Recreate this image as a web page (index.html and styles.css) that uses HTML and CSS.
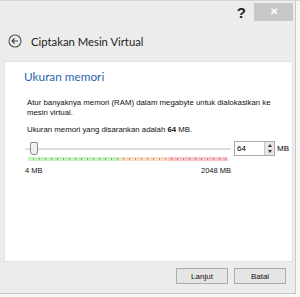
FILE: index.html
```html
<!DOCTYPE html>
<html lang="en">
<head>
    <meta charset="UTF-8">
    <title>Ciptakan Mesin Virtual</title>
    <link rel="stylesheet" href="styles.css">
</head>
<body>
    <div class="desktop">
        <div class="window">
            <div class="titlebar">
                <span class="help">?</span>
                <span class="close">&#x2715;</span>
            </div>
            <div class="header">
                <svg class="back" width="14" height="14" viewBox="0 0 14 14">
                    <circle cx="7" cy="7" r="6" fill="none" stroke="#555" stroke-width="1.1"/>
                    <path d="M10 7H4.2M6.6 4.4L4 7l2.6 2.6" fill="none" stroke="#444" stroke-width="1.2"/>
                </svg>
                <span class="title">Ciptakan Mesin Virtual</span>
            </div>
            <div class="panel">
                <h2 class="heading">Ukuran memori</h2>
                <p class="desc">Atur banyaknya memori (RAM) dalam megabyte untuk dialokasikan ke mesin virtual.</p>
                <p class="desc">Ukuran memori yang disarankan adalah <b>64</b> MB.</p>
                <div class="slider-row">
                    <div class="slider">
                        <div class="track">
                            <div class="thumb"></div>
                        </div>
                        <div class="scale">
                            <div class="zone green"></div>
                            <div class="zone orange"></div>
                            <div class="zone red"></div>
                        </div>
                        <div class="limits">
                            <span>4 MB</span>
                            <span>2048 MB</span>
                        </div>
                    </div>
                    <div class="spin">
                        <span class="value">64</span>
                        <span class="arrows">
                            <span class="up"></span>
                            <span class="down"></span>
                        </span>
                    </div>
                    <span class="unit">MB</span>
                </div>
            </div>
            <div class="footer">
                <button class="btn">Lanjut</button>
                <button class="btn">Batal</button>
            </div>
        </div>
    </div>
</body>
</html>
```

FILE: styles.css
```css
body {
    margin: 0;
    width: 300px;
    height: 297px;
    overflow: hidden;
    background: #f7f7f7;
    font-family: "Liberation Sans", Arial, sans-serif;
}

.desktop {
    border-top: 1px solid #d6d6d6;
}

.window {
    width: 295px;
    height: 292px;
    background: #ececec;
    border-right: 1px solid #c9c9c9;
    border-bottom: 1px solid #c9c9c9;
    display: flex;
    flex-direction: column;
}

.titlebar {
    height: 18px;
    margin-top: 2px;
    display: flex;
    justify-content: flex-end;
    align-items: stretch;
}

.help {
    font-size: 15px;
    font-weight: bold;
    color: #222;
    margin-right: 8px;
    line-height: 20px;
}

.close {
    width: 39px;
    margin-right: 2px;
    background: #c7c7c7;
    color: #fff;
    font-size: 10px;
    font-weight: bold;
    text-align: center;
    line-height: 18px;
}

.header {
    height: 40px;
    display: flex;
    align-items: center;
    padding-left: 8px;
}

.back {
    margin-right: 9px;
}

.title {
    font-family: Lato, sans-serif;
    font-size: 11.3px;
    color: #222;
}

.panel {
    height: 199px;
    margin: 0 2px 0 4px;
    background: #fff;
    border: 1px solid #e2e2e2;
    padding: 0 4px 0 18px;
}

.heading {
    font-family: Lato, sans-serif;
    font-weight: normal;
    font-size: 11.8px;
    color: #2c62b1;
    margin: 7px 0 14px 1px;
}

.desc {
    font-size: 7.8px;
    line-height: 10px;
    color: #111;
    margin: 0 0 7px 4px;
    width: 255px;
}

.slider-row {
    display: flex;
    align-items: flex-start;
    margin-top: 2px;
}

.slider {
    flex-shrink: 0;
    width: 206px;
    margin-left: 2px;
}

.track {
    position: relative;
    height: 2px;
    margin-top: 6px;
    background: #dcdcdc;
    border-radius: 1px;
}

.thumb {
    position: absolute;
    left: 5px;
    top: -6px;
    width: 6px;
    height: 11px;
    background: #f0f0f0;
    border: 1px solid #8c8c8c;
    border-radius: 1px 1px 3px 3px;
}

.scale {
    position: relative;
    display: flex;
    height: 4px;
    margin: 7px 3px 0 3px;
}

.scale::after {
    content: "";
    position: absolute;
    inset: 0;
    background-image: repeating-linear-gradient(90deg, transparent 0 5px, rgba(0, 0, 0, 0.3) 5px 6px);
    background-size: 100% 2px;
    background-repeat: no-repeat;
    background-position: 0 1px;
}

.zone {
    height: 4px;
}

.green {
    width: 93px;
    background: #c3f5bd;
}

.orange {
    width: 47px;
    background: #fcd9c3;
}

.red {
    flex: 1;
    background: #fbc3c3;
}

.limits {
    display: flex;
    justify-content: space-between;
    font-size: 7.5px;
    color: #111;
    margin-top: 5px;
}

.spin {
    flex-shrink: 0;
    display: flex;
    width: 39px;
    height: 13px;
    margin-left: 3px;
    margin-top: -1px;
    border: 1px solid #a9a9a9;
    background: #fff;
}

.value {
    flex: 1;
    font-size: 8px;
    line-height: 13px;
    padding-left: 2px;
}

.arrows {
    width: 9px;
    display: flex;
    flex-direction: column;
    background: #e6e6e6;
    border-left: 1px solid #c8c8c8;
}

.up,
.down {
    flex: 1;
    display: flex;
    justify-content: center;
    align-items: center;
}

.up::before {
    content: "";
    border-left: 2px solid transparent;
    border-right: 2px solid transparent;
    border-bottom: 3px solid #333;
}

.down::before {
    content: "";
    border-left: 2px solid transparent;
    border-right: 2px solid transparent;
    border-top: 3px solid #333;
}

.unit {
    font-size: 8px;
    margin-left: 2px;
    line-height: 14px;
}

.footer {
    flex: 1;
    display: flex;
    justify-content: flex-end;
    align-items: flex-start;
    padding: 6px 9px 0 0;
}

.btn {
    width: 52px;
    height: 16px;
    margin-left: 6px;
    padding: 0;
    background: #e5e5e5;
    border: 1px solid #adadad;
    font-family: "Liberation Sans", Arial, sans-serif;
    font-size: 8px;
    color: #111;
}
```
